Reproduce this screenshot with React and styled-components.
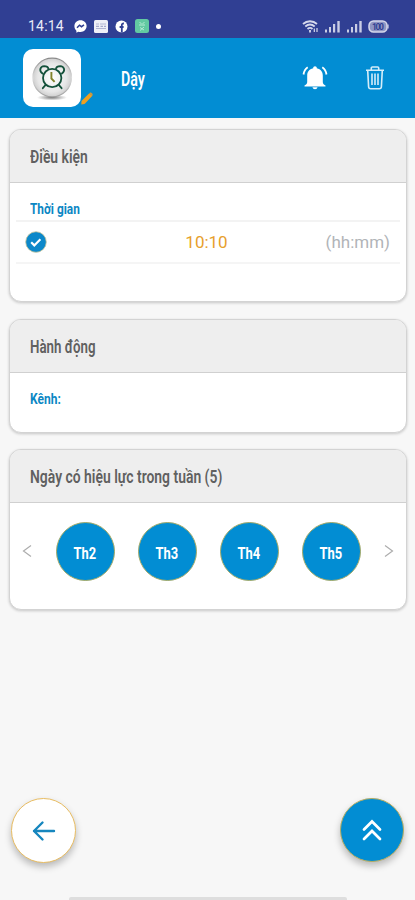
import React from "react";
import styled, { createGlobalStyle } from "styled-components";

const GlobalStyle = createGlobalStyle`
  * {
    box-sizing: border-box;
  }
  body {
    margin: 0;
    background: #f7f7f7;
    font-family: Roboto, "Noto Sans", sans-serif;
  }
`;

const Screen = styled.div`
  position: relative;
  width: 415px;
  height: 900px;
  overflow: hidden;
  background: #f7f7f7;
`;

const StatusBar = styled.div`
  display: flex;
  justify-content: space-between;
  height: 38px;
  padding: 14px 26px 0 28px;
  background: #303f93;
`;

const StatusGroup = styled.div`
  display: flex;
  align-items: center;
  gap: ${(props) => props.$gap}px;
  height: 24px;
`;

const Clock = styled.span`
  width: 39px;
  color: #e9ebf6;
  font-size: 14px;
  letter-spacing: 0.2px;
`;

const Header = styled.header`
  display: flex;
  align-items: center;
  height: 80px;
  padding: 0 30px 0 23px;
  background: #028dd3;
`;

const AppTile = styled.div`
  position: relative;
  display: flex;
  align-items: center;
  justify-content: center;
  width: 58px;
  height: 58px;
  border-radius: 10px;
  background: white;
`;

const EditMark = styled.svg`
  position: absolute;
  left: 58px;
  top: 43px;
`;

// squeezes a label to the narrow letter shape of the app font
const Narrow = styled.span`
  display: inline-block;
  white-space: nowrap;
  transform: scaleX(${(props) => props.$squeeze || 0.8});
  transform-origin: ${(props) => (props.$center ? "center" : "left")};
`;

const Title = styled.h1`
  flex: 1;
  margin: 2px 0 0 40px;
  color: white;
  font-size: 20px;
  font-weight: 600;
`;

const HeaderIcons = styled.div`
  display: flex;
  align-items: center;
  gap: 37px;
`;

const Content = styled.main`
  display: flex;
  flex-direction: column;
  padding: 11px 8px 0 9px;
`;

const Card = styled.section`
  height: ${(props) => props.$height}px;
  margin-bottom: ${(props) => props.$after || 0}px;
  overflow: hidden;
  border: 1px solid #d3d3d3;
  border-radius: 12px;
  background: white;
  box-shadow: 0 1px 3px rgba(0, 0, 0, 0.2);
`;

const CardHeader = styled.h2`
  height: 53px;
  margin: 0;
  padding-left: 20px;
  border-bottom: 1px solid #d0d0d0;
  background: #eeeeee;
  color: #606060;
  font-size: 17.5px;
  font-weight: 600;
  line-height: 55px;
`;

const Label = styled.div`
  height: 37px;
  padding: 16px 0 0 20px;
  color: #0b87c4;
  font-size: 15px;
  font-weight: 700;
  line-height: 20px;
`;

const TimeRow = styled.div`
  display: grid;
  grid-template-columns: 1fr auto 1fr;
  align-items: center;
  height: 44px;
  margin: 0 6px;
  padding: 0 10px 0 9px;
  border-top: 2px solid #f3f3f3;
  border-bottom: 2px solid #f5f5f5;
`;

const Time = styled.span`
  margin-left: -2px;
  color: #e7a02c;
  font-size: 17px;
`;

const Format = styled.span`
  justify-self: end;
  color: #b1b4b8;
  font-size: 17px;
  font-weight: 400;
`;

const DayRow = styled.div`
  display: flex;
  align-items: center;
  justify-content: space-between;
  height: 96px;
  padding: 0 12px;
`;

const Days = styled.div`
  display: flex;
  gap: 23px;
`;

const Day = styled.button`
  width: 59px;
  height: 59px;
  padding: 3px 0 0;
  border: 1px solid #a4aa68;
  border-radius: 50%;
  background: #028dd3;
  color: white;
  font-family: inherit;
  font-size: 17px;
  font-weight: 700;
`;

const FloatingButton = styled.button`
  position: absolute;
  top: 798px;
  ${(props) => (props.$right ? "right: 11px;" : "left: 11px;")}
  display: flex;
  align-items: center;
  justify-content: center;
  width: ${(props) => (props.$right ? 64 : 65)}px;
  height: ${(props) => (props.$right ? 64 : 65)}px;
  padding: 0;
  border: 1px solid ${(props) => (props.$right ? "#b5ad62" : "#e9bd62")};
  border-radius: 50%;
  background: ${(props) => (props.$right ? "#028dd3" : "white")};
  box-shadow: 0 4px 7px rgba(0, 0, 0, 0.25);
`;

const HomeBar = styled.div`
  position: absolute;
  left: 69px;
  bottom: 0;
  width: 278px;
  height: 3px;
  border-radius: 2px 2px 0 0;
  background: #dedede;
`;

const Signal = () => (
  <svg width="17" height="13" viewBox="0 0 17 13" fill="#c9cde4">
    <rect x="1" y="9.5" width="2" height="3" />
    <rect x="5" y="7" width="2" height="5.5" />
    <rect x="9" y="4" width="2.2" height="8.5" />
    <rect x="13.3" y="1" width="2.4" height="11.5" />
  </svg>
);

const Wifi = () => (
  <svg width="17" height="13" viewBox="0 0 17 13" fill="none" stroke="#d5d8eb" strokeWidth="1.8">
    <path d="M1 4C5 .3 11 .3 15 4M3.3 6.5c3-2.6 6.4-2.6 9.4 0M5.5 9c1.7-1.5 3.5-1.5 5 0" />
    <path d="M8 10v2.5" />
    <path d="M12.3 8.5V12M15 8v4" strokeWidth="1.2" />
  </svg>
);

const Battery = () => (
  <svg width="21" height="13" viewBox="0 0 21 13">
    <rect x="1" y="1" width="18" height="11" rx="4.5" fill="#8f96c3" stroke="#d5d8eb" strokeWidth="1.5" />
    <path d="M20 4.5v4" stroke="#d5d8eb" strokeWidth="1.2" />
    <text x="10" y="9.8" textAnchor="middle" fontSize="8.5" fontWeight="700" fill="#303f93" textLength="12">100</text>
  </svg>
);

const Messenger = () => (
  <svg width="13" height="13" viewBox="0 0 13 13">
    <path d="M6.5.3C3 .3.4 2.8.4 6.2c0 1.8.8 3.4 2 4.5v2l1.9-1c.7.2 1.4.3 2.2.3 3.5 0 6.1-2.5 6.1-5.9S10 .3 6.5.3Z" fill="white" />
    <path d="m3 7.7 2.5-2.5 2 1.5L10 4.9" fill="none" stroke="#303f93" strokeWidth="1.5" />
  </svg>
);

const Notice = () => (
  <svg width="14" height="13" viewBox="0 0 14 13">
    <rect width="14" height="13" rx="1.5" fill="#eeeff7" />
    <path d="M2 4h3M6 4h6M2 8.5h10" stroke="#b2b6d3" strokeWidth="1" />
    <path d="M2 6.3h3M6.5 6.3H9M10 6.3h2" stroke="#9298be" strokeWidth="1" />
  </svg>
);

const Facebook = () => (
  <svg width="13" height="13" viewBox="0 0 13 13">
    <circle cx="6.5" cy="6.5" r="6" fill="white" />
    <path d="M6.8 12.5V5.2c0-1.2.7-1.8 2.1-1.7M4.6 7h4" fill="none" stroke="#303f93" strokeWidth="1.8" />
  </svg>
);

const GreenApp = () => (
  <svg width="14" height="14" viewBox="0 0 14 14">
    <rect width="14" height="14" rx="2.5" fill="#62c9a2" />
    <path d="m4.5 3 2 2M9.5 3l-2 2M4 6h6M5 8.5l4 2.5M9 8l-4 3.5" stroke="#b5ead5" strokeWidth="1" />
  </svg>
);

const AlarmClock = () => (
  <svg width="44" height="48" viewBox="0 0 44 48">
    <defs>
      <radialGradient id="dial">
        <stop offset="0" stopColor="#ffffff" />
        <stop offset="0.75" stopColor="#e6e6e6" />
        <stop offset="1" stopColor="#cfcfcf" />
      </radialGradient>
      <linearGradient id="rim" x1="0" y1="0" x2="0" y2="1">
        <stop offset="0" stopColor="#8a8a8a" />
        <stop offset="0.5" stopColor="#dcdcdc" />
        <stop offset="1" stopColor="#a0a0a0" />
      </linearGradient>
      <radialGradient id="ground">
        <stop offset="0" stopColor="#757575" />
        <stop offset="1" stopColor="#858585" stopOpacity="0" />
      </radialGradient>
    </defs>
    <ellipse cx="22" cy="43.5" rx="15" ry="3" fill="url(#ground)" />
    <circle cx="22.2" cy="23.5" r="19.3" fill="url(#dial)" stroke="url(#rim)" strokeWidth="1.2" />
    <g fill="none" stroke="#14513a" strokeWidth="1.8" strokeLinecap="round">
      <circle cx="22.2" cy="24" r="9.2" />
      <path d="M12.5 19.5c-4-3-2.2-7.2 1.7-7.4 2.3 0 3.9 1.1 4.2 2.5M31.9 19.5c4-3 2.2-7.2-1.7-7.4-2.3 0-3.9 1.1-4.2 2.5" />
      <path d="m15.4 31.2-2.6 3M29 31.2l2.6 3" />
    </g>
    <path d="M21.4 18v6.5l3.2 3.3" fill="none" stroke="#81822c" strokeWidth="1.9" />
  </svg>
);

const Bell = () => (
  <svg width="26" height="26" viewBox="0 0 26 26" fill="white">
    <path d="M13 1.2c-1.1 0-1.8.8-1.8 1.8v.3C7 4.1 5.2 7 5.2 10.8v6.3c0 1.5-.8 2.6-2.7 3.5v.8h21v-.8c-1.9-.9-2.7-2-2.7-3.5v-6.3c0-3.8-1.8-6.7-6-7.5V3c0-1-.7-1.8-1.8-1.8Z" />
    <path d="M10.4 22.2a2.7 2.7 0 0 0 5.2 0Z" />
    <path d="M1.5 9.5C2 6 3.4 3.7 5.7 2.2M24.5 9.5c-.5-3.5-1.9-5.8-4.2-7.3" fill="none" stroke="white" strokeWidth="1.8" />
  </svg>
);

const Trash = () => (
  <svg width="20" height="26" viewBox="0 0 20 26" fill="none" stroke="#d5edf9" strokeWidth="1.6" strokeLinejoin="round">
    <path d="M1 5.2h18M6.3 5V3.1c0-.7.5-1.1 1.1-1.1h5.2c.6 0 1.1.4 1.1 1.1V5" />
    <path d="m2.7 5.4.9 16.3c.1 1.2.8 2 2 2h8.8c1.2 0 1.9-.8 2-2l.9-16.3" />
    <path d="M7 8.5v11.5M10 8.5v11.5M13 8.5v11.5" strokeWidth="1.6" />
  </svg>
);

const Check = () => (
  <svg width="22" height="22" viewBox="0 0 22 22">
    <circle cx="11" cy="11" r="10.3" fill="#0c88ca" stroke="#c5c49b" strokeWidth="0.8" />
    <path d="m6.2 11.3 3.1 3.1 6.1-6.2" fill="none" stroke="white" strokeWidth="2.2" />
  </svg>
);

const Chevron = ({ flip }) => (
  <svg width="11" height="14" viewBox="0 0 11 14" fill="none" stroke="#adadad" strokeWidth="1.2">
    <path d={flip ? "m2 1.5 7.5 5.5L2 12.5" : "M9 1.5 1.5 7 9 12.5"} />
  </svg>
);

const days = ["Th2", "Th3", "Th4", "Th5"];

export default function App() {
  return (
    <Screen>
      <GlobalStyle />
      <StatusBar>
        <StatusGroup $gap={7}>
          <Clock>14:14</Clock>
          <Messenger />
          <Notice />
          <Facebook />
          <GreenApp />
          <svg width="5" height="5" viewBox="0 0 5 5">
            <circle cx="2.5" cy="2.5" r="2.5" fill="white" />
          </svg>
        </StatusGroup>
        <StatusGroup $gap={5}>
          <Wifi />
          <Signal />
          <Signal />
          <Battery />
        </StatusGroup>
      </StatusBar>
      <Header>
        <AppTile>
          <AlarmClock />
          <EditMark width="12" height="13" viewBox="0 0 12 13">
            <path d="M.3 12.5.5 8.9 8.3 1.2l3.1 2.6L3.6 12Z" fill="#f0a020" />
            <path d="m8.3 1.2.9-.7c.8-.5 2.9 1.2 2.4 2.1l-.2 1.2Z" fill="#d6983a" />
          </EditMark>
        </AppTile>
        <Title>
          <Narrow $squeeze={0.71}>Dậy</Narrow>
        </Title>
        <HeaderIcons>
          <Bell />
          <Trash />
        </HeaderIcons>
      </Header>
      <Content>
        <Card $height={173} $after={17}>
          <CardHeader>
            <Narrow $squeeze={0.795}>Điều kiện</Narrow>
          </CardHeader>
          <Label>
            <Narrow $squeeze={0.79}>Thời gian</Narrow>
          </Label>
          <TimeRow>
            <Check />
            <Time>10:10</Time>
            <Format>(hh:mm)</Format>
          </TimeRow>
        </Card>
        <Card $height={114} $after={16}>
          <CardHeader>
            <Narrow $squeeze={0.76}>Hành động</Narrow>
          </CardHeader>
          <Label>
            <Narrow $squeeze={0.8}>Kênh:</Narrow>
          </Label>
        </Card>
        <Card $height={161}>
          <CardHeader>
            <Narrow $squeeze={0.795}>Ngày có hiệu lực trong tuần (5)</Narrow>
          </CardHeader>
          <DayRow>
            <Chevron />
            <Days>
              {days.map((day) => (
                <Day key={day}>
                  <Narrow $squeeze={0.76} $center>
                    {day}
                  </Narrow>
                </Day>
              ))}
            </Days>
            <Chevron flip />
          </DayRow>
        </Card>
      </Content>
      <FloatingButton>
        <svg width="24" height="22" viewBox="0 0 24 22" fill="none" stroke="#1686be" strokeWidth="2.4" strokeLinecap="round" strokeLinejoin="round">
          <path d="M22 11H2M10.5 2.5 2 11l8.5 8.5" />
        </svg>
      </FloatingButton>
      <FloatingButton $right>
        <svg width="20" height="22" viewBox="0 0 20 22" fill="none" stroke="white" strokeWidth="2.7" strokeLinecap="round">
          <path d="m2 10.5 8-8 8 8M2 20l8-8 8 8" />
        </svg>
      </FloatingButton>
      <HomeBar />
    </Screen>
  );
}
